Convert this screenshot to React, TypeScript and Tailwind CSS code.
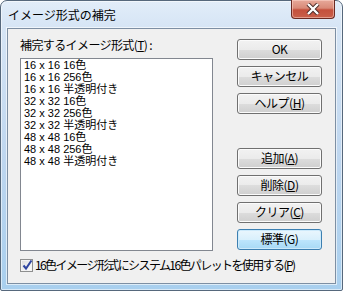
import React from "react";

const F = "font-['Noto_Sans_CJK_JP','Noto_Sans',sans-serif]";
const L = "font-['Liberation_Sans','Noto_Sans_CJK_JP',sans-serif]";

function Btn({ children, def }: { children: React.ReactNode; def?: boolean }) {
  return (
    <div
      className={
        "h-[21px] w-[85px] rounded-[3px] border flex items-center justify-center text-[12px] leading-none text-black tracking-[-0.5px] " +
        (def
          ? "border-[#3c7fb1] bg-[linear-gradient(#eaf6fd_0%,#d9f0fc_50%,#bee6fd_50%,#a7d9f5_100%)] shadow-[inset_0_0_0_1px_#cdeafb]"
          : "border-[#707070] bg-[linear-gradient(#f2f2f2_0%,#ebebeb_50%,#dddddd_50%,#cfcfcf_100%)] shadow-[inset_0_0_0_1px_#fbfbfb]")
      }
    >
      <span className="relative top-[-0.5px]">{children}</span>
    </div>
  );
}

const U = ({ c }: { c: string }) => <span className="underline underline-offset-[1px]">{c}</span>;

const items = [
  "16 x 16 16色",
  "16 x 16 256色",
  "16 x 16 半透明付き",
  "32 x 32 16色",
  "32 x 32 256色",
  "32 x 32 半透明付き",
  "48 x 48 16色",
  "48 x 48 256色",
  "48 x 48 半透明付き",
];

export default function App() {
  return (
    <div className={"w-[343px] h-[291px] bg-white " + F}>
      <div className="relative w-[343px] h-[291px] rounded-t-[7px] rounded-b-[2px] border border-[#56687c] bg-[linear-gradient(180deg,#e2edf9_0px,#d6e5f5_26px,#bed6ef_55%,#a8cfee_100%)] shadow-[inset_0_0_0_1px_rgba(255,255,255,0.55)] flex flex-col px-[6px] pb-[6px]">
        <div className="h-[27px] flex items-center pl-[1px] text-[12px] leading-none text-black">
          <span className="relative top-[0px]">イメージ形式の補完</span>
        </div>
        {/* close button */}
        <div className="absolute left-[290px] top-[-1px] w-[44px] h-[19px] rounded-b-[4px] border border-[#6b2a22] border-t-0 bg-[linear-gradient(180deg,#e7a99a_0%,#d98a78_45%,#c4503c_55%,#c9604a_100%)] shadow-[inset_0_0_0_1px_rgba(255,220,210,0.5)] flex items-center justify-center">
          <svg width="14" height="12" viewBox="0 0 14 12">
            <path d="M2 1 L12 11 M12 1 L2 11" fill="none" stroke="#4b2b28" strokeWidth="4.2" />
            <path d="M2 1 L12 11 M12 1 L2 11" fill="none" stroke="#ffffff" strokeWidth="2.4" />
          </svg>
        </div>
        <div className="flex-1 bg-[#f0f0f0] border border-[#7d8fa3] shadow-[0_0_0_1px_rgba(255,255,255,0.6)] flex flex-col pl-[12px] pt-[10px] text-[12px] text-black">
          <div className="flex">
            <div className="flex flex-col w-[193px]">
              <div className="h-[12px] leading-[12px] whitespace-nowrap tracking-[-0.6px]">
                補完するイメージ形式(<U c="T" />) :
              </div>
              <div className={"mt-[7px] h-[193px] border border-[#828790] bg-white pl-[3px] flex flex-col text-[11px] " + L}>
                {items.map((t) => (
                  <div key={t} className="h-[12px] leading-[12px] whitespace-nowrap">
                    {t}
                  </div>
                ))}
              </div>
            </div>
            <div className="ml-[24px] flex flex-col">
              <div className="flex flex-col gap-[6px]">
                <Btn>OK</Btn>
                <Btn>キャンセル</Btn>
                <Btn>
                  ヘルプ(<U c="H" />)
                </Btn>
              </div>
              <div className="mt-[34px] flex flex-col gap-[6px]">
                <Btn>
                  追加(<U c="A" />)
                </Btn>
                <Btn>
                  削除(<U c="D" />)
                </Btn>
                <Btn>
                  クリア(<U c="C" />)
                </Btn>
                <Btn def>標準(G)</Btn>
              </div>
            </div>
          </div>
          <div className="mt-[7px] flex items-center h-[14px]">
            <div className="w-[13px] h-[13px] border border-[#8e8f8f] bg-[linear-gradient(135deg,#dcdcdc,#ffffff)] shadow-[inset_0_0_0_1px_#f4f4f4] relative shrink-0">
              <svg className="absolute left-[1px] top-[0px]" width="11" height="11" viewBox="0 0 11 11">
                <path d="M1.5 5.5 L4 8.5 L9.5 0.5" fill="none" stroke="#2f45a0" strokeWidth="2" />
              </svg>
            </div>
            <span className="ml-[2px] leading-[12px] whitespace-nowrap tracking-[-1.6px]">
              16色イメージ形式にシステム16色パレットを使用する(<U c="P" />)
            </span>
          </div>
        </div>
      </div>
    </div>
  );
}
